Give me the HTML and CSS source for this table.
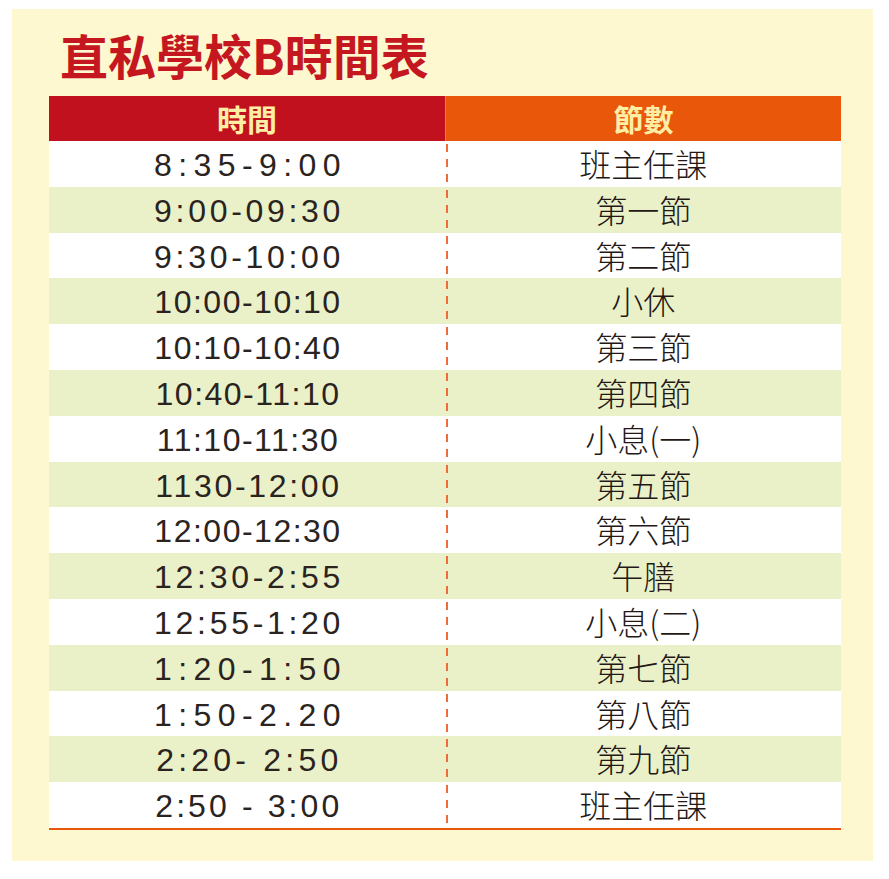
FILE: index.html
```html
<!DOCTYPE html>
<html lang="zh-Hant">
<head>
<meta charset="utf-8">
<title>直私學校B時間表</title>
<link rel="stylesheet" href="styles.css">
</head>
<body>
<div class="panel">
  <h1 class="title">直私學校B時間表</h1>
  <table class="schedule">
    <thead>
      <tr>
        <th class="head-time">時間</th>
        <th class="head-period">節數</th>
      </tr>
    </thead>
    <tbody>
      <tr><td class="time"><span class="t sp-a">8:35-9:00</span></td><td class="period">班主任課</td></tr>
      <tr><td class="time"><span class="t sp-b">9:00-09:30</span></td><td class="period">第一節</td></tr>
      <tr><td class="time"><span class="t sp-b">9:30-10:00</span></td><td class="period">第二節</td></tr>
      <tr><td class="time"><span class="t sp-d">10:00-10:10</span></td><td class="period">小休</td></tr>
      <tr><td class="time"><span class="t sp-d">10:10-10:40</span></td><td class="period">第三節</td></tr>
      <tr><td class="time"><span class="t sp-d">10:40-11:10</span></td><td class="period">第四節</td></tr>
      <tr><td class="time"><span class="t sp-d">11:10-11:30</span></td><td class="period">小息(一)</td></tr>
      <tr><td class="time"><span class="t sp-c">1130-12:00</span></td><td class="period">第五節</td></tr>
      <tr><td class="time"><span class="t sp-d">12:00-12:30</span></td><td class="period">第六節</td></tr>
      <tr><td class="time"><span class="t sp-b">12:30-2:55</span></td><td class="period">午膳</td></tr>
      <tr><td class="time"><span class="t sp-b">12:55-1:20</span></td><td class="period">小息(二)</td></tr>
      <tr><td class="time"><span class="t sp-a">1:20-1:50</span></td><td class="period">第七節</td></tr>
      <tr><td class="time"><span class="t sp-a">1:50-2.20</span></td><td class="period">第八節</td></tr>
      <tr><td class="time"><span class="t sp-e">2:20-&nbsp;2:50</span></td><td class="period">第九節</td></tr>
      <tr><td class="time"><span class="t sp-f">2:50&nbsp;-&nbsp;3:00</span></td><td class="period">班主任課</td></tr>
    </tbody>
  </table>
</div>
</body>
</html>
```

FILE: styles.css
```css
html, body {
  margin: 0;
  padding: 0;
  background: #ffffff;
}

body {
  font-family: "Liberation Sans", "Noto Sans CJK TC", sans-serif;
  color: #231815;
}

.panel {
  margin: 9px 16px 0 12px;
  width: 861px;
  height: 852px;
  box-sizing: border-box;
  padding: 0 32px 0 37px;
  background: #fdf8d0;
}

.title {
  margin: 0 0 17px 0;
  padding: 20px 0 0 11px;
  height: 50px;
  line-height: 50px;
  font-family: "Noto Sans CJK TC", sans-serif;
  font-weight: 700;
  font-size: 48px;
  color: #c4171f;
  letter-spacing: 0;
}

.schedule {
  width: 792px;
  border-collapse: collapse;
  border-spacing: 0;
  table-layout: fixed;
  border-bottom: 2px solid #e8550d;
}

.schedule th {
  height: 45px;
  padding: 0;
  font-family: "Noto Sans CJK TC", sans-serif;
  font-weight: 700;
  font-size: 30px;
  line-height: 45px;
  color: #fcefa5;
  text-align: center;
}

.head-time {
  width: 396px;
  background: #c1111f;
  border-right: 1px solid #f07a4a;
}

.head-period {
  background: #e9570b;
}

.schedule tbody tr {
  background: #ffffff;
}

.schedule tbody tr:nth-child(even) {
  background: #eaf1c8;
}

.schedule td {
  height: 45.8px;
  padding: 0;
  text-align: center;
  vertical-align: middle;
  line-height: 45.8px;
}

.time {
  font-family: "Liberation Sans", sans-serif;
  font-size: 32px;
  color: #2a2320;
  white-space: nowrap;
}

.period {
  font-family: "Noto Sans CJK TC", sans-serif;
  font-weight: 300;
  font-size: 32px;
  background-image: linear-gradient(to bottom, #f06a3a 0, #f06a3a 8px, transparent 8px);
  background-size: 2px 15px;
  background-repeat: repeat-y;
  background-position: 0 3px;
}

.t {
  display: inline-block;
  line-height: 36px;
  vertical-align: -2px;
  letter-spacing: var(--ls);
  margin-right: calc(-1 * var(--ls));
}

.sp-a { --ls: 6.4px; }
.sp-b { --ls: 3.7px; }
.sp-c { --ls: 2.7px; }
.sp-d { --ls: 1.5px; }
.sp-e { --ls: 4.2px; }
.sp-f { --ls: 3.1px; }
```
